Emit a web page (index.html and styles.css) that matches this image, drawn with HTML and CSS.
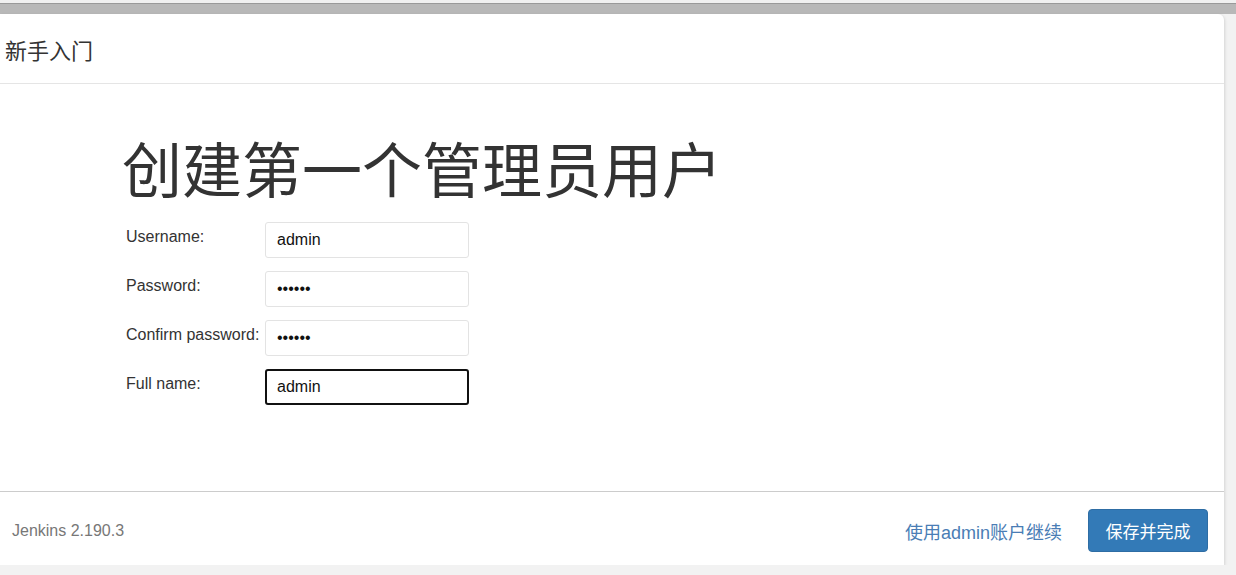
FILE: index.html
```html
<!DOCTYPE html>
<html lang="zh-CN">
<head>
  <meta charset="UTF-8" />
  <title>新手入门</title>
  <link rel="stylesheet" href="styles.css">
</head>
<body>
  <div class="top-strip"></div>

  <div class="modal">
    <div class="modal-header">新手入门</div>

    <div class="modal-body">
      <h1>创建第一个管理员用户</h1>

      <div class="form">
        <div class="row">
          <label>Username:</label>
          <input class="field" type="text" value="admin">
        </div>
        <div class="row">
          <label>Password:</label>
          <input class="field" type="password" value="123456">
        </div>
        <div class="row">
          <label>Confirm password:</label>
          <input class="field" type="password" value="123456">
        </div>
        <div class="row">
          <label>Full name:</label>
          <input class="field focus" type="text" value="admin">
        </div>
      </div>
    </div>

    <div class="modal-footer">
      <div class="version">Jenkins 2.190.3</div>
      <div class="actions">
        <a class="skip" href="#">使用admin账户继续</a>
        <button class="save">保存并完成</button>
      </div>
    </div>
  </div>
</body>
</html>
```

FILE: styles.css
```css
body {
  margin: 0;
  font-family: "Liberation Sans", Arial, "Noto Sans CJK SC", sans-serif;
  background: #f2f2f2;
  color: #333;
}

.top-strip {
  height: 4px;
  background: #f0f0f0;
  border-bottom: 10px solid #b8b8b8;
  box-shadow: inset 0 -1px 0 #999;
}

.modal {
  width: 1224px;
  background: #fff;
  border-radius: 0 6px 0 0;
  box-shadow: 1px 1px 3px rgba(0, 0, 0, 0.12);
}

.modal-header {
  height: 70px;
  box-sizing: border-box;
  padding: 20px 0 0 5px;
  font-family: "Noto Sans CJK SC", sans-serif;
  font-size: 22px;
  line-height: 30px;
  color: #333;
  border-bottom: 1px solid #e5e5e5;
}

.modal-body {
  height: 408px;
  box-sizing: border-box;
  padding: 42px 0 0 122px;
  border-bottom: 1px solid #ccc;
}

h1 {
  margin: 0;
  font-family: "Noto Sans CJK SC", sans-serif;
  font-weight: 400;
  font-size: 60px;
  line-height: 82px;
  color: #333;
}

.form {
  margin: 14px 0 0 4px;
  display: flex;
  flex-direction: column;
  gap: 13px;
}

.row {
  display: flex;
  align-items: flex-start;
}

.row label {
  width: 139px;
  font-size: 16px;
  line-height: 20px;
  padding-top: 5px;
  color: #333;
}

.field {
  width: 204px;
  height: 36px;
  box-sizing: border-box;
  border: 1px solid #e3e3e3;
  border-radius: 3px;
  padding: 0 11px;
  font-family: "Liberation Sans", Arial, sans-serif;
  font-size: 16px;
  color: #111;
  background: #fff;
  outline: none;
}

.field.focus {
  border: 2px solid #111;
  padding: 0 10px;
}

.modal-footer {
  height: 73px;
  display: flex;
  align-items: center;
  justify-content: space-between;
  padding: 4px 16px 0 12px;
  box-sizing: border-box;
}

.version {
  font-size: 16px;
  color: #777;
}

.actions {
  display: flex;
  align-items: center;
  gap: 26px;
}

.skip {
  font-family: "Liberation Sans", Arial, "Noto Sans CJK SC", sans-serif;
  font-size: 18px;
  color: #4a7db5;
  text-decoration: none;
}

.save {
  width: 120px;
  height: 43px;
  background: #337ab7;
  border: 1px solid #2e6da4;
  border-radius: 4px;
  color: #fff;
  font-family: "Noto Sans CJK SC", sans-serif;
  font-size: 17px;
  cursor: pointer;
}
```
